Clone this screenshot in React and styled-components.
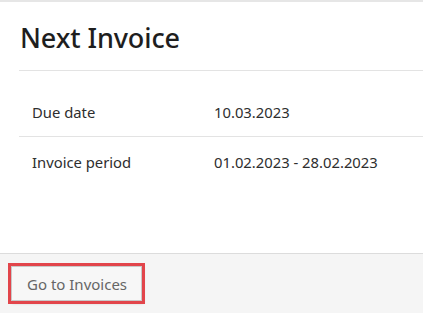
import React from 'react';
import styled, { createGlobalStyle } from 'styled-components';

const GlobalStyle = createGlobalStyle`
  html, body {
    margin: 0;
    padding: 0;
    background: #ffffff;
  }

  body {
    font-family: 'Noto Sans', 'Open Sans', sans-serif;
  }
`;

const Card = styled.section`
  width: 423px;
  height: 313px;
  display: flex;
  flex-direction: column;
  border-top: 2px solid #e6e6e6;
  box-sizing: border-box;
  overflow: hidden;
`;

const Header = styled.div`
  margin-left: 19px;
  height: 69px;
  display: flex;
  align-items: center;
  padding-top: 3px;
  border-bottom: 1px solid #e3e3e3;
  box-sizing: border-box;
`;

const Title = styled.h2`
  margin: 0 0 0 1px;
  font-size: 27px;
  font-weight: 500;
  color: #1e1e1e;
  letter-spacing: -0.1px;
`;

const Details = styled.div`
  flex: 1;
  padding-top: 16px;
`;

const Row = styled.div`
  margin-left: 19px;
  height: 49px;
  display: grid;
  grid-template-columns: 182px 1fr;
  align-items: center;
  padding-left: 13px;
  border-bottom: ${({ $last }) => ($last ? 'none' : '1px solid #e3e3e3')};
  font-size: 14.8px;
  color: #2e2e2e;
`;

const Footer = styled.div`
  height: 60px;
  background: #f5f5f5;
  border-top: 1px solid #dcdcdc;
  display: flex;
  align-items: flex-start;
  padding: 12px 0 0 11px;
  box-sizing: border-box;
`;

const Button = styled.button`
  height: 35px;
  padding: 0 14px 0 15px;
  background: #f7f7f7;
  border: 1px solid #c9c9c9;
  box-shadow: 1px 2px 3px rgba(0, 0, 0, 0.25);
  outline: 3px solid #e2454b;
  outline-offset: 0;
  font-family: 'Noto Sans', 'Open Sans', sans-serif;
  font-size: 15px;
  color: #666666;
  cursor: pointer;
`;

const rows = [
  { label: 'Due date', value: '10.03.2023' },
  { label: 'Invoice period', value: '01.02.2023 - 28.02.2023' },
];

const App = () => (
  <>
    <GlobalStyle />
    <Card>
      <Header>
        <Title>Next Invoice</Title>
      </Header>
      <Details>
        {rows.map((row, i) => (
          <Row key={row.label} $last={i === rows.length - 1}>
            <span>{row.label}</span>
            <span>{row.value}</span>
          </Row>
        ))}
      </Details>
      <Footer>
        <Button type="button">Go to Invoices</Button>
      </Footer>
    </Card>
  </>
);

export default App;
